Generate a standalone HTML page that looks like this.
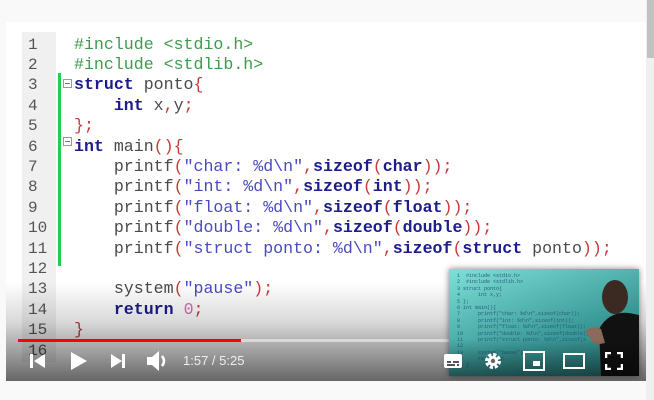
<!DOCTYPE html>
<html><head><meta charset="utf-8"><style>
*{margin:0;padding:0;box-sizing:border-box}
body{width:654px;height:400px;background:#f9f9f9;position:relative;overflow:hidden;font-family:"Liberation Sans",sans-serif}
.sb{position:absolute;left:646px;top:0;width:8px;height:400px;background:#efefef}
.sb i{position:absolute;left:1px;top:0;width:7px;height:58px;background:#c1c1c1}
.vid{position:absolute;left:6px;top:22px;width:640px;height:359px;background:#fff;overflow:hidden}
.gut{position:absolute;left:16px;top:10px;width:34px;height:330px;background:#f0f0f0}
.code{position:absolute;left:0;top:12.5px;font-family:"Liberation Mono",monospace;font-size:16.6px;line-height:19.4px;color:#4a4a4a;white-space:pre}
.ln{display:inline-block;width:68px;padding-left:22px;color:#555;font-size:16px}
.g{color:#3f9a4f}.k{color:#1c1c8a;font-weight:bold}.s{color:#4a4ac0}.p{color:#c83a3a}.n{color:#d070b0}
.bar{position:absolute;left:52px;top:51px;width:3px;height:193px;background:#22cc55}
.fold{position:absolute;left:57px;width:9px;height:9px;border:1px solid #999;background:#fff}
.fold:after{content:"";position:absolute;left:1px;top:3px;width:5px;height:1px;background:#777}
.shade{position:absolute;left:0;top:260px;width:640px;height:99px;background:linear-gradient(rgba(0,0,0,0),rgba(0,0,0,.15) 40%,rgba(0,0,0,.6))}
.prog{position:absolute;left:12px;top:317px;width:494px;height:3px;background:rgba(220,220,220,.9)}
.prog i{position:absolute;left:0;top:0;width:223px;height:3px;background:#f00}
.thumb{position:absolute;left:443px;top:247px;width:190px;height:107px;background:linear-gradient(160deg,#7fe0d8,#3a9a98 60%,#276e70);box-shadow:0 0 6px rgba(0,0,0,.5);overflow:hidden}
.thumb .t{position:absolute;left:8px;top:4px;font-family:"Liberation Mono",monospace;font-size:5px;line-height:6.4px;color:#2a5a7a;white-space:pre}
.ctl{position:absolute;color:#fff}
.time{position:absolute;left:177px;top:331px;color:#eee;font-size:13px}
</style></head><body>
<div class="sb"><i></i></div>
<div class="vid">
<div class="gut"></div>
<div class="bar"></div>
<div class="fold" style="top:57px"></div>
<div class="fold" style="top:115px"></div>
<div class="code"><span class="ln">1</span><span class="g">#include &lt;stdio.h&gt;</span>
<span class="ln">2</span><span class="g">#include &lt;stdlib.h&gt;</span>
<span class="ln">3</span><span class="k">struct</span> ponto<span class="p">{</span>
<span class="ln">4</span>    <span class="k">int</span> x<span class="p">,</span>y<span class="p">;</span>
<span class="ln">5</span><span class="p">};</span>
<span class="ln">6</span><span class="k">int</span> main<span class="p">(){</span>
<span class="ln">7</span>    printf<span class="p">(</span><span class="s">"char: %d\n"</span><span class="p">,</span><span class="k">sizeof</span><span class="p">(</span><span class="k">char</span><span class="p">));</span>
<span class="ln">8</span>    printf<span class="p">(</span><span class="s">"int: %d\n"</span><span class="p">,</span><span class="k">sizeof</span><span class="p">(</span><span class="k">int</span><span class="p">));</span>
<span class="ln">9</span>    printf<span class="p">(</span><span class="s">"float: %d\n"</span><span class="p">,</span><span class="k">sizeof</span><span class="p">(</span><span class="k">float</span><span class="p">));</span>
<span class="ln">10</span>    printf<span class="p">(</span><span class="s">"double: %d\n"</span><span class="p">,</span><span class="k">sizeof</span><span class="p">(</span><span class="k">double</span><span class="p">));</span>
<span class="ln">11</span>    printf<span class="p">(</span><span class="s">"struct ponto: %d\n"</span><span class="p">,</span><span class="k">sizeof</span><span class="p">(</span><span class="k">struct</span> ponto<span class="p">));</span>
<span class="ln">12</span>
<span class="ln">13</span>    system<span class="p">(</span><span class="s">"pause"</span><span class="p">);</span>
<span class="ln">14</span>    <span class="k">return</span> <span class="n">0</span><span class="p">;</span>
<span class="ln">15</span><span class="p">}</span>
<span class="ln">16</span></div>
<div class="shade"></div>
<div class="prog"><i></i></div>
<div class="thumb"><div class="t">1  #include &lt;stdio.h&gt;
2  #include &lt;stdlib.h&gt;
3 struct ponto{
4      int x,y;
5 };
6 int main(){
7      printf("char: %d\n",sizeof(char));
8      printf("int: %d\n",sizeof(int));
9      printf("float: %d\n",sizeof(float));
10     printf("double: %d\n",sizeof(double));
11     printf("struct ponto: %d\n",sizeof(s
12
13     system("pause");
14     return 0;
15 }</div>
<svg style="position:absolute;left:130px;top:0" width="60" height="107"><ellipse cx="36" cy="28" rx="13" ry="17" fill="#3a2a22"/><path d="M20 60 Q30 42 50 44 L60 46 L60 107 L22 107 Z" fill="#111"/><path d="M6 62 Q14 56 22 60 L26 74 L16 76 Z" fill="#8a6a5a"/></svg>
<div style="position:absolute;left:0;top:70px;width:190px;height:37px;background:linear-gradient(rgba(0,0,0,0),rgba(0,0,0,.45))"></div>
</div>
<svg class="ctl" style="left:24px;top:331px" width="16" height="16"><rect x="0" y="1" width="3" height="14" fill="#fff"/><path d="M15 1 L4 8 L15 15Z" fill="#fff"/></svg>
<svg class="ctl" style="left:64px;top:329px" width="18" height="20"><path d="M1 1 L17 10 L1 19Z" fill="#fff"/></svg>
<svg class="ctl" style="left:104px;top:331px" width="16" height="16"><path d="M1 1 L12 8 L1 15Z" fill="#fff"/><rect x="12" y="1" width="3" height="14" fill="#fff"/></svg>
<svg class="ctl" style="left:140px;top:328px" width="24" height="22"><path d="M1 7 H6 L13 1 V21 L6 15 H1Z" fill="#fff"/><path d="M16 6 Q20 11 16 16" stroke="#fff" stroke-width="2.5" fill="none"/></svg>
<div class="time">1:57 / 5:25</div>
<svg class="ctl" style="left:438px;top:332px" width="18" height="14"><rect width="18" height="14" rx="2" fill="#fff"/><rect x="3" y="7" width="4" height="2" fill="#555"/><rect x="9" y="7" width="6" height="2" fill="#555"/><rect x="3" y="10" width="8" height="2" fill="#555"/><rect x="13" y="10" width="2" height="2" fill="#555"/></svg>
<svg class="ctl" style="left:478px;top:330px" width="18" height="18" viewBox="0 0 18 18"><circle cx="9" cy="9" r="6" fill="none" stroke="#fff" stroke-width="4" stroke-dasharray="3 1.7"/><circle cx="9" cy="9" r="5" fill="#fff"/><circle cx="9" cy="9" r="2.2" fill="#666"/></svg>
<svg class="ctl" style="left:517px;top:329px" width="22" height="20"><rect x="1" y="1" width="20" height="18" fill="none" stroke="#fff" stroke-width="2"/><rect x="10" y="10" width="7" height="5" fill="#fff"/></svg>
<svg class="ctl" style="left:557px;top:331px" width="22" height="16"><rect x="1" y="1" width="20" height="14" fill="none" stroke="#fff" stroke-width="2"/></svg>
<svg class="ctl" style="left:599px;top:330px" width="18" height="18"><path d="M1 6V1H6M12 1H17V6M17 12V17H12M6 17H1V12" fill="none" stroke="#fff" stroke-width="2.5"/></svg>
</div>
</body></html>
